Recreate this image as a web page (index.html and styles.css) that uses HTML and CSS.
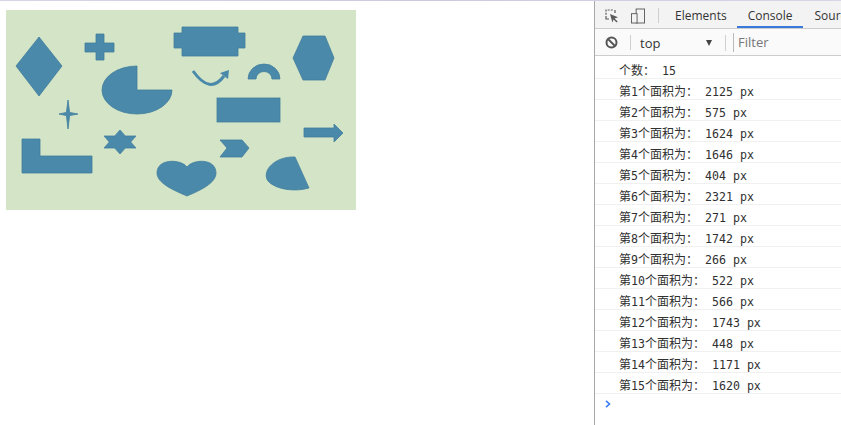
FILE: index.html
```html
<!DOCTYPE html>
<html lang="zh">
<head>
<meta charset="utf-8">
<title>shapes</title>
<link rel="stylesheet" href="styles.css">
</head>
<body>
<div class="topline"></div>
<div class="layout">
  <main class="page">
    <svg class="canvas" width="350" height="200" viewBox="0 0 350 200">
      <rect width="350" height="200" fill="#d3e4c7"/>
      <g fill="#4a89a9" stroke="#427f9e" stroke-width="0.8">
        <polygon points="10,56 33,27 56,56 33,86"/>
        <path d="M90,24 H98 V33 H108 V42 H98 V50 H90 V42 H79 V33 H90 Z"/>
        <path d="M176,17 H232 V23 H239 V38 H232 V46 H176 V38 H168 V23 H176 Z"/>
        <polygon points="287,48 297,26 319,26 328,48 319,70 297,70"/>
        <path d="M131,80 L131,56 A35,24 0 1,0 166,80 Z"/>
        <path d="M242,69 A16,15 0 0,1 274,69 L266,69 A8,7.5 0 0,0 250,69 Z"/>
        <rect x="211" y="88" width="63" height="24"/>
        <polygon points="298,118 328,118 328,114 337,123 328,132 328,127 298,127"/>
        <path d="M62,90 L63.6,102.4 L72,104 L63.6,105.6 L62,119 L60.4,105.6 L53,104 L60.4,102.4 Z"/>
        <polygon points="16,129 34,129 34,146 86,146 86,163 16,163"/>
        <polygon points="114,120 119.3,126 130,126 124.7,132 130,138 119.3,138 114,144 108.7,138 98,138 103.3,132 98,126 108.7,126"/>
        <polygon points="214,130 236,130 243,138 236,147 214,147 221,138"/>
        <path d="M181,157 C175,149 151,148 151,163 C151,173 167,180 181,186 C195,180 210,173 210,163 C210,148 187,149 181,157 Z"/>
        <path d="M289,147 L303,178 C290,182 270,180 262,171 C255,161 269,146 289,147 Z"/>
      </g>
      <path d="M187,61 Q204,85 218,66" fill="none" stroke="#4a89a9" stroke-width="3"/>
      <polygon points="214,63 223,60 222,69" fill="#4a89a9"/>
    </svg>
  </main>
  <aside class="devtools">
    <div class="tabbar">
      <span class="icon">
        <svg width="14" height="14" viewBox="0 0 14 14">
          <path d="M1,9 V1 H9" fill="none" stroke="#5a5a5a" stroke-width="1.2" stroke-dasharray="2,1.2"/>
          <path d="M1,9 V10 H4 M10,4 V1" fill="none" stroke="#5a5a5a" stroke-width="1.2"/>
          <path d="M5,5 L13,8.2 L9.6,9.4 L12.6,12.4 L11.6,13.4 L8.6,10.4 L7.4,13.6 Z" fill="#5a5a5a"/>
        </svg>
      </span>
      <span class="icon">
        <svg width="15" height="16" viewBox="0 0 15 16">
          <rect x="5.5" y="0.5" width="9" height="15" fill="none" stroke="#5a5a5a" stroke-width="1"/>
          <rect x="0.5" y="5.5" width="6" height="10" fill="#f3f3f3" stroke="#5a5a5a" stroke-width="1"/>
        </svg>
      </span>
      <span class="sep"></span>
      <span class="tab">Elements</span>
      <span class="tab active">Console</span>
      <span class="tab">Sources</span>
    </div>
    <div class="toolbar">
      <span class="icon">
        <svg width="13" height="13" viewBox="0 0 13 13">
          <circle cx="6.5" cy="6.5" r="5" fill="none" stroke="#555" stroke-width="2"/>
          <line x1="3" y1="3" x2="10" y2="10" stroke="#555" stroke-width="2"/>
        </svg>
      </span>
      <span class="sep sep2"></span>
      <span class="context">top</span>
      <span class="caret"></span>
      <span class="sep sep3"></span>
      <span class="filter">Filter</span>
    </div>
    <div class="messages">
      <div class="msg"><span class="cjk">个数：</span> 15</div>
      <div class="msg"><span class="cjk">第</span>1<span class="cjk">个面积为：</span> 2125 px</div>
      <div class="msg"><span class="cjk">第</span>2<span class="cjk">个面积为：</span> 575 px</div>
      <div class="msg"><span class="cjk">第</span>3<span class="cjk">个面积为：</span> 1624 px</div>
      <div class="msg"><span class="cjk">第</span>4<span class="cjk">个面积为：</span> 1646 px</div>
      <div class="msg"><span class="cjk">第</span>5<span class="cjk">个面积为：</span> 404 px</div>
      <div class="msg"><span class="cjk">第</span>6<span class="cjk">个面积为：</span> 2321 px</div>
      <div class="msg"><span class="cjk">第</span>7<span class="cjk">个面积为：</span> 271 px</div>
      <div class="msg"><span class="cjk">第</span>8<span class="cjk">个面积为：</span> 1742 px</div>
      <div class="msg"><span class="cjk">第</span>9<span class="cjk">个面积为：</span> 266 px</div>
      <div class="msg"><span class="cjk">第</span>10<span class="cjk">个面积为：</span> 522 px</div>
      <div class="msg"><span class="cjk">第</span>11<span class="cjk">个面积为：</span> 566 px</div>
      <div class="msg"><span class="cjk">第</span>12<span class="cjk">个面积为：</span> 1743 px</div>
      <div class="msg"><span class="cjk">第</span>13<span class="cjk">个面积为：</span> 448 px</div>
      <div class="msg"><span class="cjk">第</span>14<span class="cjk">个面积为：</span> 1171 px</div>
      <div class="msg"><span class="cjk">第</span>15<span class="cjk">个面积为：</span> 1620 px</div>
      <div class="prompt">
        <svg width="6" height="8" viewBox="0 0 6 8"><path d="M1,0.8 L4.5,4 L1,7.2" fill="none" stroke="#3a7cf0" stroke-width="1.6"/></svg>
      </div>
    </div>
  </aside>
</div>
</body>
</html>
```
FILE: styles.css
```css
html, body {
  margin: 0;
  padding: 0;
  background: #fff;
  height: 100%;
  overflow: hidden;
}
body {
  display: flex;
  flex-direction: column;
}
.topline {
  height: 1px;
  background: linear-gradient(90deg, #d9d4e6, #cfc9e0 50%, #d9d4e6);
  flex: none;
}
.layout {
  flex: 1;
  display: flex;
  min-height: 0;
}
.page {
  width: 594px;
  flex: none;
  padding: 9px 0 0 6px;
  box-sizing: border-box;
}
.canvas {
  display: block;
}
.devtools {
  flex: 1;
  min-width: 0;
  border-left: 1px solid #a8a8a8;
  display: flex;
  flex-direction: column;
  overflow: hidden;
  font-family: "Open Sans", "Noto Sans", sans-serif;
  font-size: 12px;
  color: #333;
}
.tabbar {
  height: 28px;
  background: #f3f3f3;
  border-bottom: 1px solid #cdcdcd;
  display: flex;
  align-items: flex-start;
  padding-left: 10px;
  box-sizing: border-box;
  white-space: nowrap;
  flex: none;
  overflow: hidden;
}
.icon {
  display: flex;
  align-items: center;
  justify-content: center;
  width: 14px;
  margin-right: 12px;
}
.tabbar .icon {
  height: 27px;
  padding-top: 3px;
  box-sizing: border-box;
}
.tabbar .sep {
  margin-top: 7px;
  margin-right: 6px;
}
.sep {
  width: 1px;
  height: 15px;
  background: #cfcfcf;
  margin: 0 10px 0 1px;
  flex: none;
}
.tab {
  height: 27px;
  padding: 6px 10px 0;
  line-height: 18px;
  box-sizing: border-box;
  font-size: 12px;
  color: #333;
  flex: none;
}
.tab.active {
  border-bottom: 2px solid #3879d9;
  padding: 6px 11px 0;
}
.tab.active + .tab {
  padding-left: 11px;
}
.toolbar {
  height: 27px;
  border-bottom: 1px solid #cdcdcd;
  display: flex;
  align-items: center;
  padding: 1px 0 0 10px;
  box-sizing: border-box;
  flex: none;
  background: #fafafa;
}
.toolbar .icon {
  width: 13px;
  margin-right: 11px;
}
.sep2 {
  margin-right: 9px;
}
.context {
  font-size: 13px;
  color: #333;
  width: 66px;
}
.caret {
  width: 0;
  height: 0;
  border-left: 3.5px solid transparent;
  border-right: 3.5px solid transparent;
  border-top: 6px solid #444;
  margin-right: 12px;
}
.sep3 {
  height: 16px;
  margin-right: 7px;
}
.filter {
  border-left: 1px solid #bbb;
  height: 19px;
  line-height: 19px;
  padding-left: 4px;
  color: #777;
  font-size: 13px;
  flex: 1;
}
.messages {
  padding-top: 2px;
  flex: 1;
}
.msg {
  height: 21px;
  padding-top: 3px;
  line-height: 17px;
  box-sizing: border-box;
  border-bottom: 1px solid #f0f0f0;
  padding-left: 24px;
  font-family: "DejaVu Sans Mono", "Noto Sans CJK SC", monospace;
  font-size: 11.6px;
  color: #303030;
  white-space: pre;
}
.cjk {
  font-family: "Noto Sans CJK SC", sans-serif;
  font-size: 12px;
}
.prompt {
  height: 20px;
  padding-left: 10px;
  display: flex;
  align-items: center;
}
```
